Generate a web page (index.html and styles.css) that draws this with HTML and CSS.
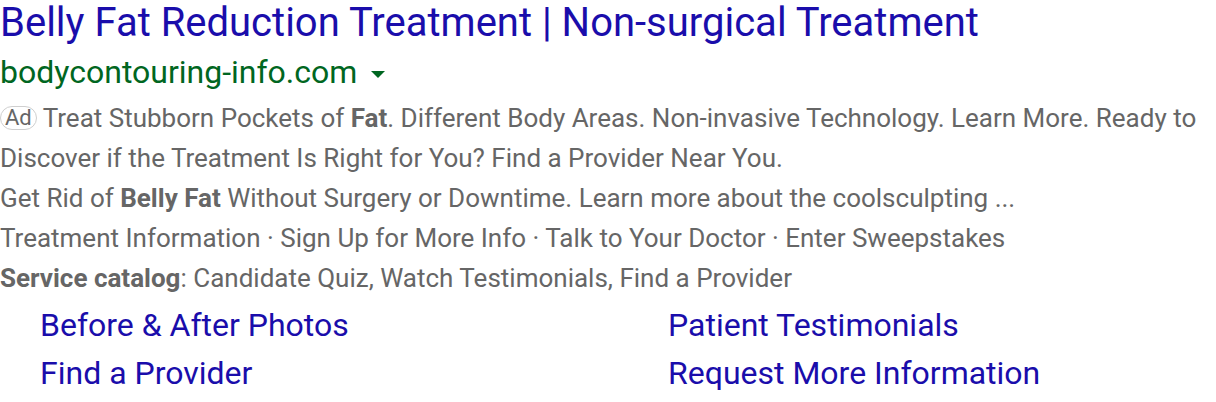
FILE: index.html
```html
<!DOCTYPE html>
<html lang="en">
<head>
<meta charset="utf-8">
<title>Belly Fat Reduction Treatment</title>
<link rel="stylesheet" href="styles.css">
</head>
<body>
<div class="ad">
  <a class="title" href="#">Belly Fat Reduction Treatment | Non-surgical Treatment</a>
  <div class="url-row">
    <span class="url">bodycontouring-info.com</span>
    <span class="caret"></span>
  </div>
  <div class="desc">
    <p><span class="badge">Ad</span> Treat Stubborn Pockets of <b>Fat</b>. Different Body Areas. Non-invasive Technology. Learn More. Ready to Discover if the Treatment Is Right for You? Find a Provider Near You.</p>
    <p>Get Rid of <b>Belly Fat</b> Without Surgery or Downtime. Learn more about the coolsculpting ...</p>
    <p>Treatment Information · Sign Up for More Info · Talk to Your Doctor · Enter Sweepstakes</p>
    <p><b>Service catalog</b>: Candidate Quiz, Watch Testimonials, Find a Provider</p>
  </div>
  <div class="sitelinks">
    <a href="#">Before &amp; After Photos</a>
    <a href="#">Patient Testimonials</a>
    <a href="#">Find a Provider</a>
    <a href="#">Request More Information</a>
  </div>
</div>
</body>
</html>
```
FILE: styles.css
```css
* { box-sizing: border-box; }
html, body { margin: 0; padding: 0; background: #fff; }
body { font-family: Roboto, "Noto Sans", Arial, sans-serif; }
.ad { width: 1216px; }
.title {
  display: block;
  font-size: 40px;
  line-height: 46px;
  color: #1a0dab;
  text-decoration: none;
  white-space: nowrap;
}
.url-row {
  display: flex;
  align-items: center;
  height: 52px;
}
.url {
  font-size: 32px;
  line-height: 52px;
  color: #006621;
}
.caret {
  width: 0; height: 0;
  margin-left: 14px;
  margin-top: 4px;
  border-left: 7px solid transparent;
  border-right: 7px solid transparent;
  border-top: 7px solid #006621;
}
.desc { color: #666; font-size: 26px; line-height: 40px; max-width: 1210px; }
.desc p { margin: 0; }
.desc b { font-weight: 700; }
.badge {
  display: inline-block;
  font-size: 22px;
  line-height: 22px;
  padding: 0 4px;
  border: 1px solid #cfcfcf;
  border-radius: 12px;
  color: #666;
  vertical-align: 2px;
}
.sitelinks {
  display: grid;
  grid-template-columns: 628px 1fr;
  padding-left: 40px;
  margin-top: 3px;
  font-size: 32px;
  line-height: 48px;
}
.sitelinks a { color: #1a0dab; text-decoration: none; }
```
